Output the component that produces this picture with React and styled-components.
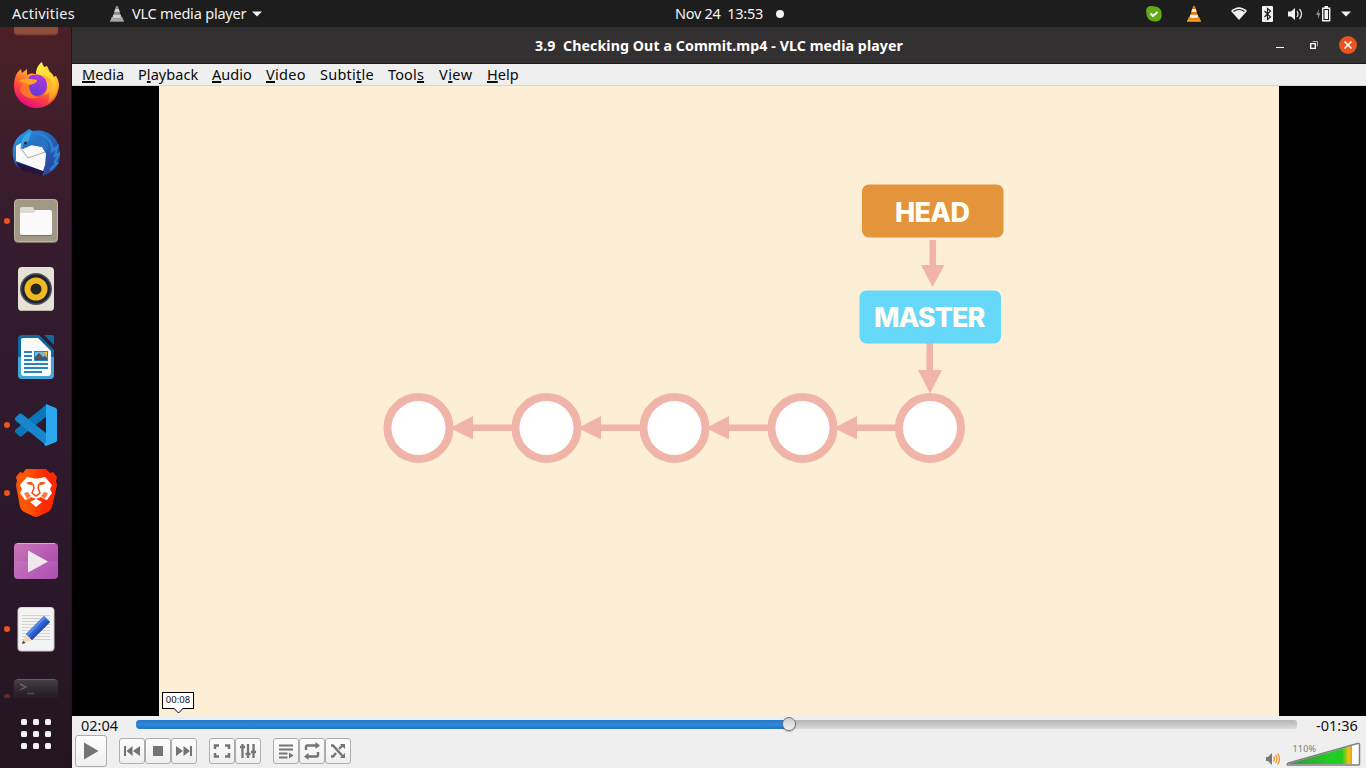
import React from "react";
import styled, { createGlobalStyle } from "styled-components";

const GlobalStyle = createGlobalStyle`
  * { box-sizing: border-box; }
  body { margin: 0; overflow: hidden; background: #000; }
`;

const Desktop = styled.div`
  width: 1366px;
  height: 768px;
  display: flex;
  flex-direction: column;
  overflow: hidden;
  font-family: "Noto Sans", "Open Sans", sans-serif;
  font-size: 14.5px;
  line-height: 20px;
  white-space: pre;
  svg { display: block; flex: none; }
`;

const TopBar = styled.header`
  height: 27px;
  flex: none;
  display: grid;
  grid-template-columns: 1fr 110px 1fr;
  align-items: center;
  background: #1d1d1d;
  color: #f2f2f2;
`;

const TopGroup = styled.div`
  display: flex;
  align-items: center;
  height: 27px;
  padding-left: ${(p) => p.$left || 0}px;
`;

const TopText = styled.span`
  letter-spacing: ${(p) => p.$spacing || 0}px;
  margin-left: ${(p) => p.$before || 0}px;
  margin-right: ${(p) => p.$after || 0}px;
  padding-bottom: 2px;
`;

const StatusArea = styled(TopGroup)`
  justify-content: flex-end;
  padding-right: 15px;
`;

const StatusIcon = styled.svg`
  margin-left: ${(p) => p.$gap}px;
`;

const Workspace = styled.div`
  flex: 1;
  min-height: 0;
  display: flex;
`;

const Dock = styled.nav`
  width: 72px;
  flex: none;
  display: flex;
  flex-direction: column;
  background: linear-gradient(#4b2026 0, #43202a 70px, #3a1c2c 140px, #331b2e 260px, #2f192d 400px, #2b172a 540px, #24151f 741px);
  border-right: 1px solid #24121c;
`;

const DockList = styled.div`
  height: 671px;
  overflow: hidden;
  position: relative;
  &::after {
    content: "";
    position: absolute;
    left: 0;
    right: 1px;
    bottom: 0;
    height: 20px;
    background: linear-gradient(transparent, rgba(38, 22, 34, 0.75));
  }
`;

const DockTrack = styled.div`
  margin-top: -44px;
`;

const DockItem = styled.div`
  height: 68px;
  display: flex;
  align-items: center;
`;

const RunningDot = styled.i`
  width: 6px;
  height: 6px;
  margin: 0 2px 0 4px;
  border-radius: 50%;
  background: ${(p) => (p.$on ? "#e95420" : "transparent")};
`;

const AppsButton = styled.div`
  flex: 1;
  display: flex;
  justify-content: center;
  padding-top: 21px;
`;

const Window = styled.main`
  flex: 1;
  min-width: 0;
  display: flex;
  flex-direction: column;
`;

const TitleBar = styled.div`
  height: 37px;
  flex: none;
  display: grid;
  grid-template-columns: 1fr 376px 1fr;
  align-items: center;
  background: #333031;
  border-bottom: 1px solid #1d1b1c;
  color: #fff;
`;

const Title = styled.h1`
  grid-column: 2;
  margin: 0;
  padding-top: 1px;
  text-align: center;
  font-size: 14.2px;
  font-weight: 700;
  line-height: 20px;
  letter-spacing: 0.08px;
`;

const WindowButtons = styled.div`
  display: flex;
  align-items: center;
  justify-content: flex-end;
  padding-right: 9px;
`;

const MenuBar = styled.div`
  height: 22px;
  flex: none;
  display: flex;
  padding-left: 10px;
  background: #efefef;
  border-bottom: 1px solid #d5d5d5;
  color: #0a0a0a;
`;

const MenuItem = styled.span`
  width: ${(p) => p.$width}px;
  letter-spacing: ${(p) => p.$spacing || 0}px;
  line-height: 21px;
`;

const Mnemonic = styled.u`
  text-decoration-thickness: 2px;
  text-underline-offset: 1px;
  text-decoration-skip-ink: none;
`;

const VideoArea = styled.section`
  height: 630px;
  flex: none;
  position: relative;
  display: flex;
  padding-left: 87px;
  background: #000;
`;

const SeekTip = styled.div`
  position: absolute;
  left: 90px;
  top: 606px;
  width: 32px;
  height: 17px;
  border: 1px solid #000;
  background: #fff;
  color: #111;
  font-size: 9.5px;
  line-height: 14px;
  text-align: center;
  svg { position: absolute; left: 11px; top: 15px; }
`;

const Controls = styled.footer`
  flex: 1;
  display: flex;
  flex-direction: column;
  background: #efefef;
  color: #111;
`;

const SeekRow = styled.div`
  height: 19px;
  display: flex;
  align-items: center;
  padding-left: 9px;
`;

const Time = styled.span`
  width: ${(p) => p.$width}px;
  margin-top: -1px;
`;

const Track = styled.div`
  width: 1161px;
  height: 9px;
  margin: 0 19px 2px 0;
  border-radius: 3px;
  background: linear-gradient(#b5b5b5, #dadada);
  display: flex;
  align-items: center;
`;

const Played = styled.div`
  width: 652px;
  height: 9px;
  border-radius: 4px 0 0 4px;
  background: linear-gradient(#2479c9, #2d86d8 50%, #2377c6);
`;

const Knob = styled.div`
  width: 14px;
  height: 14px;
  margin: -1px 0 0 -6px;
  border-radius: 50%;
  border: 1px solid #707070;
  background: linear-gradient(#cecece, #f2f2f2);
  box-shadow: 0 1px 1px rgba(0, 0, 0, 0.25);
`;

const ButtonRow = styled.div`
  flex: 1;
  display: flex;
  align-items: flex-start;
  padding-left: 3px;
`;

const ButtonGroup = styled.div`
  display: flex;
  margin: ${(p) => p.$top || 0}px 0 0 ${(p) => p.$left || 0}px;
`;

const ControlButton = styled.button`
  width: ${(p) => p.$size || 26}px;
  height: ${(p) => p.$size || 26}px;
  padding: 0;
  display: flex;
  align-items: center;
  justify-content: center;
  border: 1px solid #adadad;
  border-radius: 3px;
  background: linear-gradient(#fdfdfd, #efefef);
  color: #747474;
`;

const Volume = styled.div`
  margin: 7px 5px 0 auto;
  display: flex;
  align-items: flex-start;
  svg:first-child { margin-top: 9px; }
`;

const ConeIcon = ({ gap = 0, gray }) => (
  <StatusIcon $gap={gap} width="14" height="17" viewBox="0 0 14 17">
    <path d="M1.800 12h10.400l1.800 4.500H0z" fill={gray ? "#a8a8a8" : "#f58a0b"} />
    <path d="M6 1.200q1-1 2 0L11.500 13q-4.500 2-9 0z" fill={gray ? "#8a8a8a" : "#e87507"} />
    <path d="M5.200 4h3.600l.9 3H4.300zM3.300 9.700h7.400l.8 2.600q-4.500 2-9 0z" fill={gray ? "#d0d0d0" : "#eee"} />
    <path d="M0 15.500h14v1H0z" fill={gray ? "#999" : "#ffb02b"} />
  </StatusIcon>
);

const Caret = ({ gap }) => (
  <StatusIcon $gap={gap} width="10" height="6" viewBox="0 0 10 6">
    <path d="M0 .5h10L5 5.500z" fill="#f2f2f2" />
  </StatusIcon>
);

const Icon = ({ children }) => (
  <svg width="48" height="48" viewBox="0 0 48 48">{children}</svg>
);

const icons = {
  clipped: (
    <Icon>
      <rect x="2" y="2" width="44" height="41" rx="4" fill="#5c2c25" />
      <rect x="2" y="2" width="44" height="39.500" rx="4" fill="#8e4c3b" />
    </Icon>
  ),
  firefox: (
    <Icon>
      <defs>
        <linearGradient id="ff1" x1=".85" y1=".1" x2=".35" y2="1">
          <stop offset="0" stopColor="#ffd83a" /><stop offset=".35" stopColor="#ff9a25" />
          <stop offset=".65" stopColor="#ff4b3c" /><stop offset="1" stopColor="#e5097f" />
        </linearGradient>
        <linearGradient id="ff2" x1=".7" y1="0" x2=".3" y2="1">
          <stop offset="0" stopColor="#b833e1" /><stop offset="1" stopColor="#5b3dd0" />
        </linearGradient>
        <linearGradient id="ff3" x1="0" y1="0" x2="0" y2="1">
          <stop offset="0" stopColor="#fff44f" /><stop offset=".45" stopColor="#ffd130" /><stop offset="1" stopColor="#ff8a25" />
        </linearGradient>
      </defs>
      <path d="M3 17c1-4 3-7 6-9l1 4 5-4v6c2-1 4-2 8-1l5-1c0-5 6-7 7-7l3 6c2 1 3 3 3 5l3-1c3 5 4 9 2 15-2 10-11 17-22 17S2 37 2 26c0-4 0-6 1-9z" fill="url(#ff1)" />
      <path d="M24 13c0-6 3-10 6-12 1 5 4 7 7 10l4 3 1 3c6 9 2 20-6 24 2-5 2-12-2-18-2-5-5-9-10-10z" fill="url(#ff3)" />
      <path d="M17 16c5-4 13-3 17 3 3 8-1 15-9 16-7 0-12-6-10-13z" fill="url(#ff2)" />
      <path d="M7 20c4-3 8-3 11-2l7 1c0 3-4 4-8 5 0 7 4 12 10 12-8 4-18-1-19-8l3-5z" fill="#ff752a" />
      <path d="M7 20c4-3 8-3 11-2l7 1c0 3-4 4-8 5-3-2-6-3-10-4z" fill="#ffa32a" />
      <path d="M29 14c8 4 9 14 3 20 5-1 8-5 8-10 0-6-5-10-11-10z" fill="#ffb32b" />
    </Icon>
  ),
  thunderbird: (
    <Icon>
      <defs>
        <linearGradient id="tb" x1="0" y1="0" x2="1" y2="1">
          <stop offset="0" stopColor="#24a1e8" /><stop offset=".5" stopColor="#2265bb" /><stop offset="1" stopColor="#373693" />
        </linearGradient>
      </defs>
      <path d="M4 36C-2 25 0 11 10 5l7-5 4 2C35-1 48 9 48 25c0 9-4 15-9 18l-8 4-1-4-14-1C11 41 7 40 4 36z" fill="url(#tb)" />
      <path d="M4 33L32 42l-2 4-14-3C10 43 6 39 4 33z" fill="#24143e" />
      <path d="M4 32L4 17l5-3 1 6 10-4 11 2 3 7-1 11-2 6z" fill="#fafafa" />
      <path d="M8 18l8 11 17-6" fill="none" stroke="#aaa" strokeWidth="1" />
      <path d="M9 21C8 12 12 3 20 2c-3 5-1 6-4 10-2 4-6 4-7 9z" fill="#39a5e4" />
      <path d="M11 15c3-3 7 0 8-4 3-5 11-5 15 0 4 6 1 11-1 12l-3-5-11-2-8 4z" fill="#2871c5" />
      <path d="M24 4c11 2 17 9 16 18l5-4-2 9 4-2-4 8 2 1-7 7" fill="none" stroke="#2c82d0" strokeWidth="2.500" />
      <circle cx="13.500" cy="14" r="1.500" fill="#292e48" />
    </Icon>
  ),
  files: (
    <Icon>
      <rect x="2" y="2" width="44" height="44" rx="4" fill="#777063" />
      <rect x="2.500" y="2.500" width="43" height="42" rx="4" fill="#a19985" stroke="#bbb5a5" />
      <path d="M8 20V12q0-2 2-2h10q2 0 2 3h4v7z" fill="#dedbd0" />
      <path d="M8 16h13q2 0 3-3h14q2 0 2 2v21q0 2-2 2H10q-2 0-2-2z" fill="#fafafa" />
      <path d="M9 38.500h30" stroke="#777063" />
    </Icon>
  ),
  music: (
    <Icon>
      <rect x="6" y="2" width="36" height="44" rx="4" fill="#e6e1d6" />
      <path d="M8 45.500h32" stroke="#bdb6a9" />
      <circle cx="24" cy="24" r="16" fill="#55565a" />
      <circle cx="24" cy="24" r="14.500" fill="#222331" />
      <circle cx="24" cy="24" r="11.500" fill="#efb922" />
      <circle cx="24" cy="24" r="5.500" fill="#262626" />
    </Icon>
  ),
  writer: (
    <Icon>
      <path d="M10 2h17l15 15v25q0 4-4 4H10q-4 0-4-4V6q0-4 4-4z" fill="#116a9f" />
      <path d="M6 24h36v18q0 4-4 4H10q-4 0-4-4z" fill="#43a5d6" />
      <path d="M11 5h15l13 13v22q0 3-3 3H12q-3 0-3-3V7q0-2 2-2z" fill="#fafafa" />
      <path d="M32 2h8q2 0 2 2v8z" fill="#116a9f" />
      <path d="M12 19h8M12 23h8M12 27h8M12 31h24M12 35h24M12 39h18" stroke="#2685b9" strokeWidth="2" />
      <path d="M22 18h14v10H22z" fill="#2685b9" />
      <path d="M23 19h12v8H23z" fill="#6db8df" />
      <path d="M31 19h4v4z" fill="#f7bd28" />
      <path d="M23 27v-3l4-4 4 4 2-1 2 2v2z" fill="#525457" />
    </Icon>
  ),
  code: (
    <Icon>
      <path d="M3 31l4 4q1 1 3 0l25-20V3L4 28q-2 2-1 3z" fill="#0876b9" />
      <path d="M3 17l4-4q1-1 3 0l25 20v12L4 20q-2-2-1-3z" fill="#1687cc" />
      <path d="M34 3l10 4q1 1 1 2v30q0 1-1 2l-10 4q-1 0-2-2l2-2z" fill="#2ba7ee" />
    </Icon>
  ),
  brave: (
    <Icon>
      <defs><linearGradient id="br"><stop offset=".3" stopColor="#ff5600" /><stop offset=".7" stopColor="#ff2800" /></linearGradient></defs>
      <path d="M14 0h20l4 4 3-1 4 5-1 4 1 4-5 22q-1 3-4 5l-9 4q-3 2-6 0l-9-4q-3-2-4-5L4 16l1-4-1-4 4-5 3 1z" fill="url(#br)" />
      <path d="M15 8l5 1q4 1 8 0l5-1 7 8-2 4 2 4-5 7-3-1-3-2-5 2-5-2-3 2-3 1-5-7 2-4-2-4z" fill="#fff" />
      <path d="M14 14q4-2 7 0l-1 2q-3 0-6-2zM34 14q-4-2-7 0l1 2q3 0 6-2z" fill="#ff4500" />
      <path d="M21 15l1 4-2 5 4 3 4-3-2-5 1-4" fill="none" stroke="#ff4500" strokeWidth="1.500" />
      <path d="M12 24l4-1 3 4-4 3zM36 24l-4-1-3 4 4 3z" fill="#ff4a0a" opacity=".75" />
      <path d="M18 33l6-3 6 3-6 5z" fill="#fff" />
    </Icon>
  ),
  video: (
    <Icon>
      <defs><linearGradient id="vd" x1="0" y1="0" x2="1" y2="1"><stop stopColor="#cc78b6" /><stop offset="1" stopColor="#a33fae" /></linearGradient></defs>
      <rect x="2" y="6" width="44" height="36" rx="4" fill="url(#vd)" />
      <path d="M2 24h44v14q0 4-4 4H6q-4 0-4-4z" fill="#fff" opacity=".08" />
      <path d="M5 6.500h38" stroke="#e3a3d4" />
      <path d="M16 13.500v22L36 24.500z" fill="#efe9ef" />
    </Icon>
  ),
  editor: (
    <Icon>
      <rect x="5.500" y="2" width="37" height="44.500" rx="4" fill="#c8c8c8" />
      <rect x="6.500" y="2.500" width="35" height="43" rx="4" fill="#f3f3f3" />
      <path d="M10 10.500h28M10 13.500h28M10 16.500h28M10 19.500h28M10 22.500h28M10 25.500h28M10 28.500h28M10 31.500h28M10 34.500h28" stroke="#d2d2d2" />
      <path d="M14 29l6 6-7 3-3 1 2-5z" fill="#f6d9b5" />
      <path d="M10 39l1-3.500 2.500 2.500z" fill="#444" />
      <path d="M14 29L32 11l6 6-18 18z" fill="#2f62d4" />
      <path d="M14 29L32 11l2 2-18 18z" fill="#5386ee" />
      <path d="M18 33L36 15l2 2-18 18z" fill="#2450b5" />
    </Icon>
  ),
  terminal: (
    <Icon>
      <defs><linearGradient id="tm" x1="0" y1="0" x2="0" y2="1"><stop stopColor="#4a464b" /><stop offset=".5" stopColor="#2d292f" /></linearGradient></defs>
      <rect x="2" y="6" width="44" height="40" rx="4" fill="url(#tm)" />
      <path d="M5 6.500h38" stroke="#66626a" />
      <path d="M8 11l6 3-6 3M15 20.500h7" fill="none" stroke="#949096" strokeWidth="1.300" />
    </Icon>
  ),
};

const dockApps = [
  ["clipped", false], ["firefox", false], ["thunderbird", false], ["files", true],
  ["music", false], ["writer", false], ["code", true], ["brave", true],
  ["video", false], ["editor", true], ["terminal", true],
];

const menus = [
  ["", "M", "edia", 56, 0], ["P", "l", "ayback", 74, 0.05], ["", "A", "udio", 54, 0],
  ["", "V", "ideo", 54, 0.3], ["Subti", "t", "le", 68, 0.25], ["Tool", "s", "", 51, 0.15],
  ["V", "i", "ew", 48, 0.45], ["", "H", "elp", 40, 0.05],
];

const glyphs = {
  play: <path d="M4 2.500l14.500 8.500L4 19.500z" fill="currentColor" />,
  previous: <path d="M3 6h2v10H3zM11.500 6v10L5.500 11zM19 6v10L12 11z" fill="currentColor" />,
  stop: <path d="M6 6h10v10H6z" fill="currentColor" />,
  next: <path d="M17 6h2v10h-2zM10.500 6v10L17 11zM3 6v10L10 11z" fill="currentColor" />,
  fullscreen: <path d="M4 9V5.500h4M14 5.500h4V9M4 13v3.500h4M14 16.500h4V13" fill="none" stroke="currentColor" strokeWidth="2.500" />,
  settings: <path d="M5.500 4v14M11 4v14M16.500 4v14M3 7h5M8.500 14h5M14 12h5" fill="none" stroke="currentColor" strokeWidth="2.300" />,
  playlist: <><path d="M4 5.500h14M4 9.500h14M4 13.500h8.500M4 17.500h8.500" fill="none" stroke="currentColor" strokeWidth="2.200" /><path d="M14 12.500l4.500 3-4.500 3z" fill="currentColor" /></>,
  loop: <><path d="M5 10V7q0-1.500 1.500-1.500H15M17 12v3q0 1.500-1.500 1.500H7" fill="none" stroke="currentColor" strokeWidth="2.400" /><path d="M14.500 2l4.500 3.500L14.500 9zM7.500 13L3 16.500 7.500 20z" fill="currentColor" /></>,
  shuffle: <><path d="M4 5.500h2L15.500 16M4 16.500h2l3-3.500M12 9l3.500-3.500" fill="none" stroke="currentColor" strokeWidth="2.400" /><path d="M13 4h5v5zM18 13v5h-5z" fill="currentColor" /></>,
};

const Control = ({ name, size }) => (
  <ControlButton $size={size} aria-label={name}>
    <svg width="22" height="22" viewBox="0 0 22 22">{glyphs[name]}</svg>
  </ControlButton>
);

function CommitGraph() {
  return (
    <svg width="1120" height="630" viewBox="159 86 1120 630" fontFamily="Inter, sans-serif" fontSize="27" fontWeight="800">
      <rect x="159" y="86" width="1120" height="630" fill="#fcefd6" />
      <g fill="#f1b4a8">
        <path d="M929.500 240h6.500v25h8.500L932.500 287 921 265h8.500z" />
        <path d="M926.500 343h6.500v27h9L930 393.500 918 370h8.500z" />
        {[418, 546, 674, 802].map((x) => (
          <path key={x} d={`M${x + 32} 428L${x + 55} 416v8.500h43v6.500h-43v8.500z`} />
        ))}
      </g>
      {[418.500, 546.500, 674.500, 802.500, 930].map((x) => (
        <circle key={x} cx={x} cy="428" r="31" fill="#fff" stroke="#f1b4a8" strokeWidth="8" />
      ))}
      <rect x="862" y="184.500" width="141.500" height="53" rx="7" fill="#e4953c" />
      <rect x="859.500" y="290.500" width="141.500" height="53" rx="7" fill="#66d8f9" />
      <g fill="#fffdf5">
        <text x="895" y="222" textLength="75">HEAD</text>
        <text x="874" y="326.500" textLength="111.500">MASTER</text>
      </g>
    </svg>
  );
}

export default function App() {
  return (
    <Desktop>
      <GlobalStyle />
      <TopBar>
        <TopGroup $left={12}>
          <TopText $spacing={0.25} $after={35}>Activities</TopText>
          <ConeIcon gray />
          <TopText $spacing={-0.2} $before={8}>VLC media player</TopText>
          <Caret gap={6} />
        </TopGroup>
        <TopGroup $left={47}>
          <TopText $spacing={-0.3} $after={13}>Nov 24  13:53</TopText>
          <svg width="8" height="8"><circle cx="4" cy="4" r="4" fill="#f2f2f2" /></svg>
        </TopGroup>
        <StatusArea>
          <StatusIcon $gap={0} width="16" height="16" viewBox="0 0 16 16">
            <path d="M5 0q2.500 0 4 .5C14 1 16 5 15.500 8c1 4-2 8-6 7.500C4 16 0 12 .5 7-1 3 2 0 5 0z" fill="#62aa1c" />
            <path d="M4.500 7.500l2.500 2.500 4.500-4" fill="none" stroke="#fff" strokeWidth="2" />
          </StatusIcon>
          <ConeIcon gap={25} />
          <StatusIcon $gap={30} width="16" height="13" viewBox="0 0 16 13">
            <path d="M0 4q8-7.500 16 0L8 13z" fill="#f2f2f2" /><path d="M2.500 4.500q5.500-4 11 0" fill="none" stroke="#1d1d1d" strokeWidth="1.200" />
          </StatusIcon>
          <StatusIcon $gap={15} width="11" height="16" viewBox="0 0 11 16">
            <rect width="11" height="16" rx="1" fill="#f2f2f2" /><path d="M2.500 5l6 6L5.500 13.500V2.500l3 2.500-6 6" fill="none" stroke="#1d1d1d" strokeWidth="1.200" />
          </StatusIcon>
          <StatusIcon $gap={15} width="15" height="14" viewBox="0 0 15 14">
            <path d="M0 4.500h3L7 1v12L3 9.500H0z" fill="#f2f2f2" /><path d="M9 4q2 3 0 6M11.500 2q4 5 0 10" fill="none" stroke="#ddd" strokeWidth="1.300" />
          </StatusIcon>
          <StatusIcon $gap={13} width="15" height="16" viewBox="0 0 15 16">
            <path d="M3 3L0 9h2v4l2.500-6h-2z" fill="#8d8d8d" /><path d="M6.700 2.200h7v12.600h-7z" fill="none" stroke="#f2f2f2" strokeWidth="1.400" />
            <path d="M8.500 4h3.500v9H8.500zM8.500 0h3.500v2H8.500z" fill="#f2f2f2" />
          </StatusIcon>
          <Caret gap={10} />
        </StatusArea>
      </TopBar>
      <Workspace>
        <Dock>
          <DockList>
            <DockTrack>
              {dockApps.map(([name, running]) => (
                <DockItem key={name}><RunningDot $on={running} />{icons[name]}</DockItem>
              ))}
            </DockTrack>
          </DockList>
          <AppsButton>
            <svg width="30" height="30">
              {[0, 12, 24].flatMap((x) => [0, 12, 24].map((y) => (
                <rect key={`${x}-${y}`} x={x} y={y} width="6" height="6" rx="1.500" fill="#f2f0f1" />
              )))}
            </svg>
          </AppsButton>
        </Dock>
        <Window>
          <TitleBar>
            <Title>3.9  Checking Out a Commit.mp4 - VLC media player</Title>
            <WindowButtons>
              <StatusIcon $gap={0} width="8" height="8"><path d="M0 6.500h8" stroke="#fff" /></StatusIcon>
              <StatusIcon $gap={26} width="8" height="8">
                <path d="M2.500 .5h5v5" fill="none" stroke="#aaa" /><path d="M.7 2.700h4.600v4.600H.7z" fill="none" stroke="#fff" strokeWidth="1.300" />
              </StatusIcon>
              <StatusIcon $gap={21} width="18" height="18">
                <circle cx="9" cy="9" r="9" fill="#e95420" /><path d="M5.500 5.500l7 7m0-7l-7 7" stroke="#fff" strokeWidth="1.600" />
              </StatusIcon>
            </WindowButtons>
          </TitleBar>
          <MenuBar>
            {menus.map(([before, key, after, width, spacing]) => (
              <MenuItem key={before + key + after} $width={width} $spacing={spacing}>
                {before}<Mnemonic>{key}</Mnemonic>{after}
              </MenuItem>
            ))}
          </MenuBar>
          <VideoArea>
            <CommitGraph />
            <SeekTip>
              00:08
              <svg width="9" height="6"><path d="M0 0h9L4.500 5.500z" fill="#fff" /><path d="M0 .5L4.500 5 9 .5" fill="none" stroke="#000" /></svg>
            </SeekTip>
          </VideoArea>
          <Controls>
            <SeekRow>
              <Time $width={55}>02:04</Time>
              <Track><Played /><Knob /></Track>
              <Time $width={44}>-01:36</Time>
            </SeekRow>
            <ButtonRow>
              <Control name="play" size={32} />
              <ButtonGroup $top={3} $left={12}><Control name="previous" /><Control name="stop" /><Control name="next" /></ButtonGroup>
              <ButtonGroup $top={3} $left={12}><Control name="fullscreen" /><Control name="settings" /></ButtonGroup>
              <ButtonGroup $top={3} $left={12}><Control name="playlist" /><Control name="loop" /><Control name="shuffle" /></ButtonGroup>
              <Volume>
                <svg width="16" height="16" viewBox="0 0 16 16">
                  <path d="M1 6h2l4-4v12l-4-4H1z" fill="#777" />
                  <path d="M8.500 5.500q2 2.500 0 5M10.500 4q3 4 0 8M12.500 2.500q4 5.500 0 11" fill="none" stroke="#f29a2e" strokeWidth="1.300" />
                </svg>
                <svg width="80" height="26" viewBox="0 0 80 26">
                  <defs>
                    <linearGradient id="vol"><stop stopColor="#3f8f45" /><stop offset=".6" stopColor="#22cc22" /><stop offset=".76" stopColor="#22cc22" /><stop offset=".85" stopColor="#f3c514" /><stop offset=".9" stopColor="#f39214" /></linearGradient>
                    <clipPath id="volLevel"><path d="M0 0h71v26H0z" /></clipPath>
                  </defs>
                  <path d="M6.500 22L78.500 1.500V22z" fill="#fff" />
                  <path d="M6.500 22L78.500 1.500V22z" fill="url(#vol)" clipPath="url(#volLevel)" />
                  <path d="M6.500 23q-1-1 1-2L76.500 1.500q2-.5 2 1V22q0 1-1 1z" fill="none" stroke="#808080" strokeWidth="1.500" />
                  <text x="11.500" y="10" fontSize="9" fill="#808080" textLength="23.500">110%</text>
                </svg>
              </Volume>
            </ButtonRow>
          </Controls>
        </Window>
      </Workspace>
    </Desktop>
  );
}
